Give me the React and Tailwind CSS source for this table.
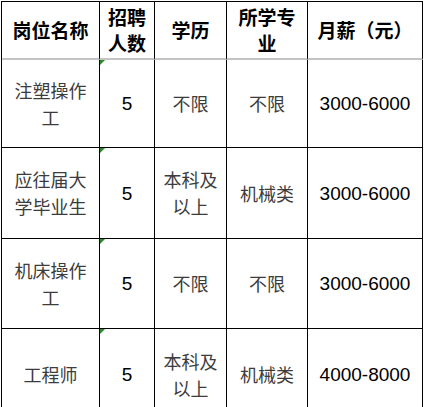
import React from 'react'

const rows = [
  { name: '注塑操作工', count: '5', edu: '不限', major: '不限', pay: '3000-6000', h: 'h-[88px]' },
  { name: '应往届大学毕业生', count: '5', edu: '本科及以上', major: '机械类', pay: '3000-6000', h: 'h-[91px]' },
  { name: '机床操作工', count: '5', edu: '不限', major: '不限', pay: '3000-6000', h: 'h-[90px]' },
  { name: '工程师', count: '5', edu: '本科及以上', major: '机械类', pay: '4000-8000', h: 'h-[92px]' },
]

const cjk = "font-['Noto_Sans_CJK_SC',sans-serif]"
const num = "font-['Liberation_Sans',Arial,sans-serif]"

const App = () => {
  return (
    <div className="w-[424px] h-[407px] overflow-hidden bg-white">
      <div className={`ml-px mt-px w-[422px] border-l border-t border-black ${cjk}`}>

        {/* Header */}
        <div className="grid grid-cols-[98px_55px_72px_81px_115px] text-[19px] font-bold leading-[26px] text-black">
          <div className="h-[58px] border-r border-b-2 border-r-black border-b-[#c4c4c4] flex items-center justify-center text-center px-1">岗位名称</div>
          <div className="h-[58px] border-r border-b-2 border-r-black border-b-[#c4c4c4] flex items-center justify-center text-center px-1">招聘人数</div>
          <div className="h-[58px] border-r border-b-2 border-r-black border-b-[#c4c4c4] flex items-center justify-center text-center px-1">学历</div>
          <div className="h-[58px] border-r border-b-2 border-r-black border-b-[#c4c4c4] flex items-center justify-center text-center px-1">所学专业</div>
          <div className="h-[58px] border-r border-b-2 border-r-black border-b-[#c4c4c4] flex items-center justify-center text-center px-1">月薪（元）</div>
        </div>

        {/* Body */}
        {rows.map((r, i) => (
          <div key={i} className="grid grid-cols-[98px_55px_72px_81px_115px] text-[18px] leading-[27px]">
            <div className={`${r.h} border-r border-b border-black flex items-center justify-center text-center px-2 text-[#3c3c3c]`}>{r.name}</div>
            <div className={`${r.h} relative border-r border-b border-black flex items-center justify-center text-[19px] text-black ${num}`}>
              <span className="absolute left-0 top-0 w-0 h-0 border-t-[5px] border-t-[#2a8a2a] border-r-[5px] border-r-transparent"></span>
              {r.count}
            </div>
            <div className={`${r.h} border-r border-b border-black flex items-center justify-center text-center px-1.5 text-[#3c3c3c]`}>{r.edu}</div>
            <div className={`${r.h} border-r border-b border-black flex items-center justify-center text-center px-1 text-[#3c3c3c]`}>{r.major}</div>
            <div className={`${r.h} border-r border-b border-black flex items-center justify-center text-[19px] text-black ${num}`}>{r.pay}</div>
          </div>
        ))}

      </div>
    </div>
  )
}

export default App
